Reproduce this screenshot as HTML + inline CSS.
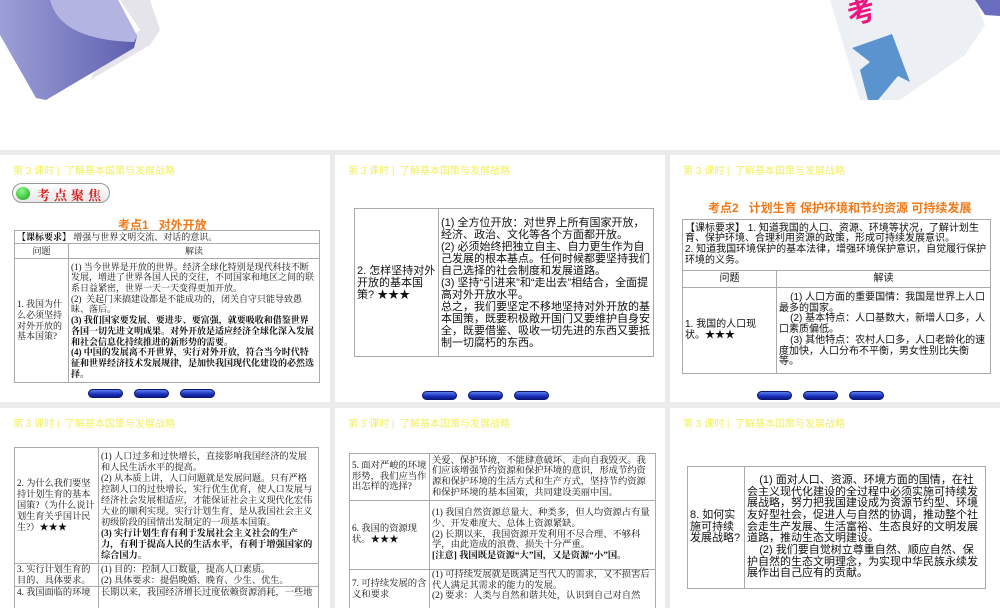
<!DOCTYPE html>
<html><head><meta charset="utf-8">
<style>
*{margin:0;padding:0;box-sizing:border-box}
body{width:1000px;height:600px;overflow:hidden;background:#ebebeb;font-family:"Liberation Serif","Noto Serif CJK SC","Noto Sans CJK SC",serif;color:#111;position:relative}
.s{position:absolute;background:#fff;overflow:hidden}
.hd{position:absolute;left:13px;top:7px;font:10px "Liberation Sans","Noto Sans CJK SC",sans-serif;color:#f2ef60;white-space:nowrap}
table{position:absolute;border-collapse:collapse;table-layout:fixed}
td{border:1px solid #aaa;vertical-align:middle;padding:0 2px}
.b{font-weight:bold}
.btns{position:absolute;display:flex;gap:11px}
.btn{width:35px;height:9px;border-radius:5px;background:linear-gradient(#5a7ef0,#1a2fb8 60%,#0c1a8a);border:1px solid #0a1670}
.ot{position:absolute;color:#f07a1a;font:bold 12px "Liberation Sans","Noto Sans CJK SC",sans-serif;white-space:nowrap}
</style></head><body>

<div class="s" style="left:0;top:0;width:1000px;height:150px">
<svg width="1000" height="150" style="position:absolute;left:0;top:0">
<defs><linearGradient id="g1" x1="0" y1="0" x2="1" y2="0"><stop offset="0" stop-color="#9d9fd8"/><stop offset="1" stop-color="#5d5fae"/></linearGradient></defs>
<polygon points="120,0 150,0 160,30 150,45 90,80 100,60 140,30" fill="#e4e4ea"/>
<polygon points="0,0 118,0 137,36 134,48 46,100 36,98 0,35" fill="url(#g1)"/>
<path d="M50,0 Q60,40 134,42 L137,36 L118,0Z" fill="#b3b4e2"/>
<polygon points="830,0 975,0 985,25 965,55 900,100 860,100" fill="#eceff3"/>
<text x="848" y="22" fill="#ee1580" font-size="28" font-weight="bold" font-family="Noto Sans CJK SC,sans-serif" transform="rotate(-15 860 15)">考</text>
<polygon points="975,0 1000,0 1000,16 985,15" fill="#6a6cc0"/>
<polygon points="852,48 892,34 910,82 898,76 878,100 868,100 860,70 870,62" fill="#5b93cf"/>
</svg>
</div>

<!-- row 1 slide 1 -->
<div class="s" style="left:0;top:155px;width:330px;height:247px">
<div class="hd">第 3 课时 |&nbsp; 了解基本国策与发展战略</div>
<div style="position:absolute;left:12px;top:28px;width:98px;height:20px;border:1px solid #999;border-radius:10px;background:linear-gradient(#fff,#e8e8e8)">
<div style="position:absolute;left:3px;top:3px;width:14px;height:13px;border-radius:50%;background:radial-gradient(circle at 40% 30%,#8f8,#1a9a1a)"></div>
<div style="position:absolute;left:24px;top:1px;color:#d81c1c;font:bold 13px 'Noto Serif CJK SC',serif;letter-spacing:4px;white-space:nowrap">考点聚焦</div></div>
<div class="ot" style="left:118px;top:61px">考点1 &nbsp;&nbsp;对外开放</div>
<table style="left:14px;top:75px;width:306px;font-size:9px;line-height:10.7px">
<col style="width:54px"><col>
<tr style="height:13px"><td colspan="2"><b>【课标要求】</b> 增强与世界文明交流、对话的意识。</td></tr>
<tr style="height:15px"><td style="text-align:center">问题</td><td style="text-align:center">解读</td></tr>
<tr style="height:124px"><td>1. 我国为什么必须坚持对外开放的基本国策?</td><td>(1) 当今世界是开放的世界。经济全球化特别是现代科技不断发展，增进了世界各国人民的交往，不同国家和地区之间的联系日益紧密，世界一天一天变得更加开放。<br>(2)&nbsp; 关起门来搞建设都是不能成功的，闭关自守只能导致愚昧、落后。<br><b>(3) 我们国家要发展、要进步、要富强，就要吸收和借鉴世界各国一切先进文明成果。对外开放是适应经济全球化深入发展和社会信息化持续推进的新形势的需要。<br>(4) 中国的发展离不开世界，实行对外开放，符合当今时代特征和世界经济技术发展规律，是加快我国现代化建设的必然选择。</b></td></tr>
</table>
<div class="btns" style="left:88px;top:234px"><div class="btn"></div><div class="btn"></div><div class="btn"></div></div>
</div>

<!-- row 1 slide 2 -->
<div class="s" style="left:335px;top:155px;width:330px;height:247px">
<div class="hd">第 3 课时 |&nbsp; 了解基本国策与发展战略</div>
<table style="left:19px;top:53px;width:300px;font-size:11px;line-height:12px;font-family:'Liberation Sans','Noto Sans CJK SC',sans-serif">
<col style="width:84px"><col>
<tr style="height:148px"><td>2. 怎样坚持对外开放的基本国策? ★★★</td><td>(1) 全方位开放：对世界上所有国家开放，经济、政治、文化等各个方面都开放。<br>(2) 必须始终把独立自主、自力更生作为自己发展的根本基点。任何时候都要坚持我们自己选择的社会制度和发展道路。<br>(3) 坚持“引进来”和“走出去”相结合，全面提高对外开放水平。<br>总之，我们要坚定不移地坚持对外开放的基本国策，既要积极敞开国门又要维护自身安全，既要借鉴、吸收一切先进的东西又要抵制一切腐朽的东西。</td></tr>
</table>
<div class="btns" style="left:87px;top:236px"><div class="btn"></div><div class="btn"></div><div class="btn"></div></div>
</div>

<!-- row 1 slide 3 -->
<div class="s" style="left:670px;top:155px;width:330px;height:247px">
<div class="hd">第 3 课时 |&nbsp; 了解基本国策与发展战略</div>
<div class="ot" style="left:38px;top:44px">考点2 &nbsp;&nbsp;计划生育 保护环境和节约资源 可持续发展</div>
<table style="left:12px;top:64px;width:309px;font-size:10px;line-height:10.7px;font-family:'Liberation Sans','Noto Sans CJK SC',sans-serif">
<col style="width:94px"><col>
<tr style="height:51px"><td colspan="2">【课标要求】 1. 知道我国的人口、资源、环境等状况，了解计划生育、保护环境、合理利用资源的政策，形成可持续发展意识。<br>2. 知道我国环境保护的基本法律，增强环境保护意识，自觉履行保护环境的义务。</td></tr>
<tr style="height:17px"><td style="text-align:center">问题</td><td style="text-align:center">解读</td></tr>
<tr style="height:86px"><td>1. 我国的人口现状。★★★</td><td>&nbsp;&nbsp;&nbsp; (1) 人口方面的重要国情：我国是世界上人口最多的国家。<br>&nbsp;&nbsp;&nbsp; (2) 基本特点：人口基数大，新增人口多，人口素质偏低。<br>&nbsp;&nbsp;&nbsp; (3) 其他特点：农村人口多，人口老龄化的速度加快，人口分布不平衡，男女性别比失衡等。</td></tr>
</table>
<div class="btns" style="left:87px;top:236px"><div class="btn"></div><div class="btn"></div><div class="btn"></div></div>
</div>

<!-- row 2 slide 1 -->
<div class="s" style="left:0;top:408px;width:330px;height:200px">
<div class="hd">第 3 课时 |&nbsp; 了解基本国策与发展战略</div>
<table style="left:14px;top:39px;width:305px;font-size:9.2px;line-height:11px">
<col style="width:84px"><col>
<tr style="height:116px"><td>2. 为什么我们要坚持计划生育的基本国策?（为什么说计划生育关乎国计民生?）<b>★★★</b></td><td>(1) 人口过多和过快增长，直接影响我国经济的发展和人民生活水平的提高。<br>(2) 从本质上讲，人口问题就是发展问题。只有严格控制人口的过快增长，实行优生优育，使人口发展与经济社会发展相适应，才能保证社会主义现代化宏伟大业的顺利实现。实行计划生育，是从我国社会主义初级阶段的国情出发制定的一项基本国策。<br><b>(3) 实行计划生育有利于发展社会主义社会的生产力，有利于提高人民的生活水平，有利于增强国家的综合国力。</b></td></tr>
<tr style="height:20px"><td>3. 实行计划生育的目的、具体要求。</td><td>(1) 目的：控制人口数量，提高人口素质。<br>(2) 具体要求：提倡晚婚、晚育、少生、优生。</td></tr>
<tr style="height:30px"><td style="vertical-align:top">4. 我国面临的环境</td><td style="vertical-align:top">长期以来，我国经济增长过度依赖资源消耗，一些地</td></tr>
</table>
</div>

<!-- row 2 slide 2 -->
<div class="s" style="left:335px;top:408px;width:330px;height:200px">
<div class="hd">第 3 课时 |&nbsp; 了解基本国策与发展战略</div>
<table style="left:14px;top:45px;width:307px;font-size:9.3px;line-height:10.7px">
<col style="width:80px"><col>
<tr style="height:47px"><td>5. 面对严峻的环境形势，我们应当作出怎样的选择?</td><td>关爱、保护环境，不能肆意破坏、走向自我毁灭。我们应该增强节约资源和保护环境的意识，形成节约资源和保护环境的生活方式和生产方式，坚持节约资源和保护环境的基本国策，共同建设美丽中国。</td></tr>
<tr style="height:69px"><td>6. 我国的资源现状。<b>★★★</b></td><td>(1) 我国自然资源总量大、种类多，但人均资源占有量少、开发难度大、总体上资源紧缺。<br>(2) 长期以来，我国资源开发利用不尽合理、不够科学，由此造成的浪费、损失十分严重。<br><b>[注意] 我国既是资源“大”国，又是资源“小”国。</b></td></tr>
<tr style="height:40px"><td>7. 可持续发展的含义和要求</td><td style="vertical-align:top">(1) 可持续发展就是既满足当代人的需求，又不损害后代人满足其需求的能力的发展。<br>(2) 要求：人类与自然和谐共处，认识到自己对自然</td></tr>
</table>
</div>

<!-- row 2 slide 3 -->
<div class="s" style="left:670px;top:408px;width:330px;height:200px">
<div class="hd">第 3 课时 |&nbsp; 了解基本国策与发展战略</div>
<table style="left:17px;top:58px;width:299px;font-size:11px;line-height:11.7px;font-family:'Liberation Sans','Noto Sans CJK SC',sans-serif">
<col style="width:57px"><col>
<tr style="height:122px"><td>8. 如何实施可持续发展战略?</td><td>&nbsp;&nbsp;&nbsp; (1) 面对人口、资源、环境方面的国情，在社会主义现代化建设的全过程中必须实施可持续发展战略，努力把我国建设成为资源节约型、环境友好型社会，促进人与自然的协调，推动整个社会走生产发展、生活富裕、生态良好的文明发展道路，推动生态文明建设。<br>&nbsp;&nbsp;&nbsp; (2) 我们要自觉树立尊重自然、顺应自然、保护自然的生态文明理念，为实现中华民族永续发展作出自己应有的贡献。</td></tr>
</table>
</div>

</body></html>
